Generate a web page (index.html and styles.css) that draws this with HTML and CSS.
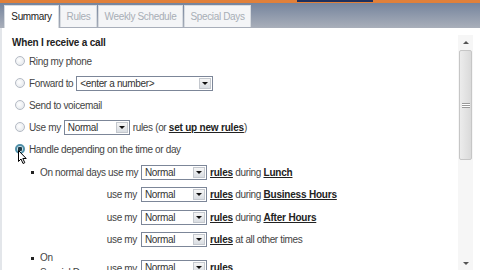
FILE: index.html
```html
<!DOCTYPE html>
<html>
<head>
<meta charset="utf-8">
<link rel="stylesheet" href="styles.css">
</head>
<body>
<div class="topbar"><div class="accent"></div></div>
<div class="tabbar">
  <div class="tab active">Summary</div>
  <div class="tab">Rules</div>
  <div class="tab">Weekly Schedule</div>
  <div class="tab">Special Days</div>
</div>
<div class="content">
  <div class="main">
    <div class="title">When I receive a call</div>
    <div class="row"><span class="radio"></span><span>Ring my phone</span></div>
    <div class="row"><span class="radio"></span><span>Forward to</span>
      <span class="select wide"><span class="val">&lt;enter a number&gt;</span><span class="btn"></span></span></div>
    <div class="row"><span class="radio"></span><span>Send to voicemail</span></div>
    <div class="row"><span class="radio"></span><span>Use my</span>
      <span class="select"><span class="val">Normal</span><span class="btn"></span></span>
      <span>rules (or <a class="lnk">set up new rules</a>)</span></div>
    <div class="row handle"><span class="radio on"></span><span>Handle depending on the time or day</span>
      <svg class="cursor" width="10" height="15" viewBox="0 0 10 15"><path d="M0.5 0.5 L0.5 11.5 L3 9 L5 13.5 L6.8 12.7 L4.8 8.5 L8.2 8.5 Z" fill="#fff" stroke="#000" stroke-width="1"/></svg>
    </div>
    <div class="group">
      <span class="bullet"></span>
      <div class="grid">
        <div class="lbl first">On normal days use my</div>
        <span class="select"><span class="val">Normal</span><span class="btn"></span></span>
        <div class="rest"><a class="lnk">rules</a> during <a class="lnk">Lunch</a></div>
        <div class="lbl">use my</div>
        <span class="select"><span class="val">Normal</span><span class="btn"></span></span>
        <div class="rest"><a class="lnk">rules</a> during <a class="lnk">Business Hours</a></div>
        <div class="lbl">use my</div>
        <span class="select"><span class="val">Normal</span><span class="btn"></span></span>
        <div class="rest"><a class="lnk">rules</a> during <a class="lnk">After Hours</a></div>
        <div class="lbl">use my</div>
        <span class="select"><span class="val">Normal</span><span class="btn"></span></span>
        <div class="rest"><a class="lnk">rules</a> at all other times</div>
      </div>
    </div>
    <div class="group g2">
      <span class="bullet"></span>
      <div class="grid">
        <div class="lbl split"><span class="name">On<br>Special Days</span><span>use my</span></div>
        <span class="select"><span class="val">Normal</span><span class="btn"></span></span>
        <div class="rest"><a class="lnk">rules</a></div>
      </div>
    </div>
  </div>
  <div class="scroll">
    <div class="sbtn up"></div>
    <div class="thumb"><span class="grip"></span></div>
    <div class="track"></div>
    <div class="sbtn down"></div>
  </div>
</div>
</body>
</html>
```
FILE: styles.css
```css
html, body {
  margin: 0;
  padding: 0;
}
body {
  width: 480px;
  height: 270px;
  overflow: hidden;
  background: #fff;
  font-family: "Liberation Sans", Arial, sans-serif;
  font-size: 10px;
  letter-spacing: -0.35px;
  color: #444;
}
.topbar {
  height: 3px;
  background: #e0803a;
  display: flex;
  padding-left: 297px;
}
.accent {
  width: 76px;
  height: 2px;
  background: #1e2f5c;
}
.tabbar {
  height: 25px;
  background: linear-gradient(#75849d, #a9afba);
  display: flex;
  align-items: flex-end;
  padding-left: 4px;
  gap: 1px;
  box-sizing: border-box;
}
.tab {
  height: 22px;
  line-height: 21px;
  padding: 0;
  text-align: center;
  white-space: nowrap;
  background: #f4f5f7;
  color: #a8aeb6;
  border: 1px solid #d7dbe0;
  border-bottom: none;
  box-sizing: border-box;
  margin-bottom: 1px;
}
.tab.active {
  background: #fff;
  color: #222;
  width: 55px;
  margin-bottom: 0;
  height: 23px;
}
.tab:nth-child(2) { width: 37px; }
.tab:nth-child(3) { width: 85px; }
.tab:nth-child(4) { width: 67px; }
.content {
  height: 242px;
  display: flex;
  border-left: 2px solid #e3e6ea;
}
.main {
  flex: 1;
  padding: 8px 0 0 10px;
}
.title {
  height: 14px;
  line-height: 14px;
  font-weight: bold;
  letter-spacing: -0.2px;
  color: #222;
}
.row {
  height: 22px;
  display: flex;
  align-items: center;
  padding-left: 3px;
  gap: 3px;
  position: relative;
}
.radio {
  width: 10px;
  height: 10px;
  border-radius: 50%;
  box-sizing: border-box;
  border: 1px solid #b4bac4;
  background: radial-gradient(circle at 40% 40%, #fff, #dfe3e8);
  margin-right: 1px;
}
.radio.on {
  border: 2px solid #4f8fa8;
  background: radial-gradient(circle, #1f3944 0 2px, #cfe4ec 2.5px);
}
.cursor {
  position: absolute;
  left: 6px;
  top: 12px;
}
.select {
  height: 15px;
  width: 66px;
  box-sizing: border-box;
  border: 1px solid #7c8698;
  background: #fff;
  display: inline-flex;
  align-items: center;
  color: #333;
}
.select.wide { width: 137px; }
.val {
  flex: 1;
  padding-left: 3px;
  white-space: nowrap;
  overflow: hidden;
}
.btn {
  width: 12px;
  height: 11px;
  margin-right: 1px;
  box-sizing: border-box;
  border: 1px solid #c4c8ce;
  background: linear-gradient(#f6f6f6, #d9dde2);
  display: flex;
  align-items: center;
  justify-content: center;
}
.btn::after {
  content: "";
  border-left: 3px solid transparent;
  border-right: 3px solid transparent;
  border-top: 3px solid #111;
}
.lnk {
  font-weight: bold;
  text-decoration: underline;
  color: #222;
  letter-spacing: -0.2px;
}
.group {
  display: flex;
  padding-left: 19px;
  margin-top: 1px;
}
.bullet {
  width: 3px;
  height: 3px;
  background: #222;
  margin-top: 10px;
  margin-right: 6px;
}
.grid {
  display: grid;
  grid-template-columns: 98px 66px auto;
  grid-auto-rows: 22.5px;
  align-items: center;
  column-gap: 3px;
}
.lbl {
  text-align: right;
  padding-right: 1px;
  white-space: nowrap;
}
.lbl.first { text-align: left; }
.g2 .grid { grid-auto-rows: 30px; }
.g2 .bullet { margin-top: 5px; }
.lbl.split {
  display: flex;
  justify-content: space-between;
  align-items: center;
  text-align: left;
  align-self: stretch;
}
.name {
  line-height: 15px;
  margin-top: -2px;
  align-self: flex-start;
}
.split > span:last-child { margin-top: 3px; }
.scroll {
  width: 15px;
  margin: 7px 7px 0 0;
  display: flex;
  flex-direction: column;
  background: #f6f6f6;
}
.sbtn {
  height: 15px;
  display: flex;
  align-items: center;
  justify-content: center;
}
.sbtn.up::after {
  content: "";
  border-left: 3px solid transparent;
  border-right: 3px solid transparent;
  border-bottom: 3px solid #555;
}
.sbtn.down {
  height: 13px;
}
.sbtn.down::after {
  content: "";
  border-left: 3px solid transparent;
  border-right: 3px solid transparent;
  border-top: 3px solid #555;
}
.thumb {
  height: 110px;
  margin: 0 1px;
  box-sizing: border-box;
  border: 1px solid #c6c6c6;
  border-radius: 2px;
  background: linear-gradient(90deg, #ececec, #dadada);
  display: flex;
  align-items: center;
  justify-content: center;
}
.grip {
  width: 8px;
  height: 5px;
  border-top: 1px solid #999;
  border-bottom: 1px solid #999;
  box-sizing: border-box;
  background: linear-gradient(#fff 0 1px, #999 1px 2px, #fff 2px);
}
.track { flex: 1; }
```
